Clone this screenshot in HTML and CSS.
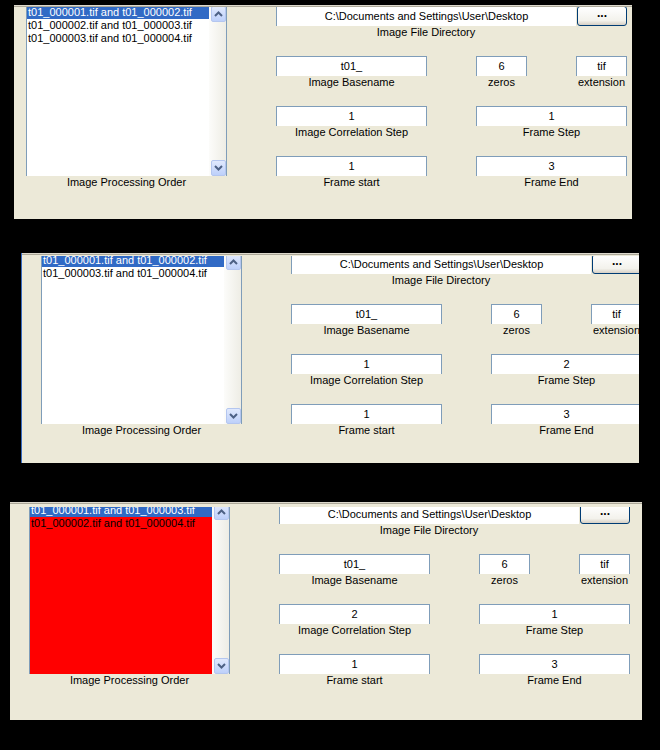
FILE: index.html
```html
<!DOCTYPE html>
<html>
<head>
<meta charset="utf-8">
<title>Image Processing</title>
<link rel="stylesheet" href="styles.css">
</head>
<body>

<div class="panel p1">
  <div class="edge"></div>
  <div class="view">
    <div class="form">
      <div class="listcol">
        <div class="listbox">
          <div class="items">
            <div class="item sel">t01_000001.tif and t01_000002.tif</div>
            <div class="item">t01_000002.tif and t01_000003.tif</div>
            <div class="item">t01_000003.tif and t01_000004.tif</div>
          </div>
          <div class="sbar">
            <div class="sbtn"><svg width="9" height="6" viewBox="0 0 9 6"><polyline points="1,5 4.5,1.5 8,5" fill="none" stroke="#4d6185" stroke-width="2"/></svg></div>
            <div class="sbtn"><svg width="9" height="6" viewBox="0 0 9 6"><polyline points="1,1 4.5,4.5 8,1" fill="none" stroke="#4d6185" stroke-width="2"/></svg></div>
          </div>
        </div>
        <div class="label">Image Processing Order</div>
      </div>
      <div class="fields">
        <div class="row top">
          <div class="field w300"><div class="box dir">C:\Documents and Settings\User\Desktop</div><div class="label">Image File Directory</div></div>
          <div class="btn">...</div>
        </div>
        <div class="row">
          <div class="field w151"><div class="box">t01_</div><div class="label">Image Basename</div></div>
          <div class="field w51"><div class="box">6</div><div class="label">zeros</div></div>
          <div class="field w51"><div class="box">tif</div><div class="label">extension</div></div>
        </div>
        <div class="row">
          <div class="field w151"><div class="box">1</div><div class="label">Image Correlation Step</div></div>
          <div class="field w151"><div class="box">1</div><div class="label">Frame Step</div></div>
        </div>
        <div class="row">
          <div class="field w151"><div class="box">1</div><div class="label">Frame start</div></div>
          <div class="field w151"><div class="box">3</div><div class="label">Frame End</div></div>
        </div>
      </div>
    </div>
  </div>
</div>

<div class="panel p2">
  <div class="edge"></div>
  <div class="view">
    <div class="form">
      <div class="listcol">
        <div class="listbox">
          <div class="items">
            <div class="item sel">t01_000001.tif and t01_000002.tif</div>
            <div class="item">t01_000003.tif and t01_000004.tif</div>
          </div>
          <div class="sbar">
            <div class="sbtn"><svg width="9" height="6" viewBox="0 0 9 6"><polyline points="1,5 4.5,1.5 8,5" fill="none" stroke="#4d6185" stroke-width="2"/></svg></div>
            <div class="sbtn"><svg width="9" height="6" viewBox="0 0 9 6"><polyline points="1,1 4.5,4.5 8,1" fill="none" stroke="#4d6185" stroke-width="2"/></svg></div>
          </div>
        </div>
        <div class="label">Image Processing Order</div>
      </div>
      <div class="fields">
        <div class="row top">
          <div class="field w300"><div class="box dir">C:\Documents and Settings\User\Desktop</div><div class="label">Image File Directory</div></div>
          <div class="btn">...</div>
        </div>
        <div class="row">
          <div class="field w151"><div class="box">t01_</div><div class="label">Image Basename</div></div>
          <div class="field w51"><div class="box">6</div><div class="label">zeros</div></div>
          <div class="field w51"><div class="box">tif</div><div class="label">extension</div></div>
        </div>
        <div class="row">
          <div class="field w151"><div class="box">1</div><div class="label">Image Correlation Step</div></div>
          <div class="field w151"><div class="box">2</div><div class="label">Frame Step</div></div>
        </div>
        <div class="row">
          <div class="field w151"><div class="box">1</div><div class="label">Frame start</div></div>
          <div class="field w151"><div class="box">3</div><div class="label">Frame End</div></div>
        </div>
      </div>
    </div>
  </div>
</div>

<div class="panel p3">
  <div class="edge"></div>
  <div class="view">
    <div class="form">
      <div class="listcol">
        <div class="listbox">
          <div class="items">
            <div class="item sel">t01_000001.tif and t01_000003.tif</div>
            <div class="item">t01_000002.tif and t01_000004.tif</div>
          </div>
          <div class="sbar">
            <div class="sbtn"><svg width="9" height="6" viewBox="0 0 9 6"><polyline points="1,5 4.5,1.5 8,5" fill="none" stroke="#4d6185" stroke-width="2"/></svg></div>
            <div class="sbtn"><svg width="9" height="6" viewBox="0 0 9 6"><polyline points="1,1 4.5,4.5 8,1" fill="none" stroke="#4d6185" stroke-width="2"/></svg></div>
          </div>
        </div>
        <div class="label">Image Processing Order</div>
      </div>
      <div class="fields">
        <div class="row top">
          <div class="field w300"><div class="box dir">C:\Documents and Settings\User\Desktop</div><div class="label">Image File Directory</div></div>
          <div class="btn">...</div>
        </div>
        <div class="row">
          <div class="field w151"><div class="box">t01_</div><div class="label">Image Basename</div></div>
          <div class="field w51"><div class="box">6</div><div class="label">zeros</div></div>
          <div class="field w51"><div class="box">tif</div><div class="label">extension</div></div>
        </div>
        <div class="row">
          <div class="field w151"><div class="box">2</div><div class="label">Image Correlation Step</div></div>
          <div class="field w151"><div class="box">1</div><div class="label">Frame Step</div></div>
        </div>
        <div class="row">
          <div class="field w151"><div class="box">1</div><div class="label">Frame start</div></div>
          <div class="field w151"><div class="box">3</div><div class="label">Frame End</div></div>
        </div>
      </div>
    </div>
  </div>
</div>

</body>
</html>
```

FILE: styles.css
```css
html, body {
  margin: 0;
  background: #000;
}
body {
  width: 660px;
  height: 750px;
  overflow: hidden;
  padding-top: 5px;
  box-sizing: border-box;
  font-family: "Liberation Sans", Arial, sans-serif;
  font-size: 11px;
  color: #000;
}

.panel {
  background: #ece9d8;
  box-sizing: border-box;
}
.p1 {
  margin-left: 14px;
  width: 618px;
}
.p2 {
  margin-top: 34px;
  margin-left: 21px;
  width: 618px;
  border-left: 1px solid #3a6cc0;
}
.p3 {
  margin-top: 39px;
  margin-left: 10px;
  width: 632px;
}

.edge {
  height: 1px;
  background: #dcd8cc;
  border-bottom: 1px solid #aca899;
}

.view {
  overflow: hidden;
}
.p1 .view { height: 212px; }
.p2 .view { margin-top: 1px; height: 207px; }
.p3 .view { margin-top: 3px; height: 213px; }

.form {
  display: flex;
  align-items: flex-start;
  column-gap: 49px;
}
.p1 .form { margin-top: -2px; padding-left: 12px; }
.p2 .form { margin-top: -3px; padding-left: 19px; }
.p3 .form { margin-top: -4px; padding-left: 19px; }

.listcol, .fields, .field, .btn {
  flex-shrink: 0;
}

.listbox {
  width: 201px;
  height: 171px;
  box-sizing: border-box;
  border: 1px solid #7f9db9;
  border-bottom: none;
  background: #fff;
  display: flex;
}
.items {
  flex: 1;
  min-width: 0;
}
.p3 .items {
  background: #ff0000;
}
.item {
  height: 13px;
  line-height: 12px;
  padding-left: 1px;
  white-space: nowrap;
  overflow: hidden;
}
.item.sel {
  background: #316ac5;
  color: #fff;
}

.sbar {
  width: 17px;
  flex-shrink: 0;
  background: linear-gradient(to right, #fcfcfa, #eeede5);
  display: flex;
  flex-direction: column;
  justify-content: space-between;
  align-items: flex-end;
}
.sbtn {
  width: 15px;
  height: 16px;
  box-sizing: border-box;
  border: 1px solid #b4c6ef;
  border-radius: 2px;
  background: linear-gradient(#e0e9fd, #bdd0fa);
  display: flex;
  align-items: center;
  justify-content: center;
}
.sbtn svg {
  display: block;
}

.label {
  height: 12px;
  line-height: 12px;
  text-align: center;
  white-space: nowrap;
}

.fields {
  margin-top: 1px;
  display: flex;
  flex-direction: column;
  row-gap: 18px;
}
.row {
  display: flex;
  align-items: flex-start;
  column-gap: 49px;
}
.row.top {
  column-gap: 1px;
}

.w151 { width: 151px; }
.w51 { width: 51px; }
.w300 { width: 300px; }

.box {
  height: 20px;
  box-sizing: border-box;
  border: 1px solid #7f9db9;
  border-bottom: none;
  background: #fff;
  text-align: center;
  line-height: 19px;
  white-space: nowrap;
  overflow: hidden;
}
.box.dir {
  border-right: none;
}

.btn {
  width: 50px;
  height: 20px;
  box-sizing: border-box;
  border: 1px solid #003c74;
  border-radius: 3px;
  background: linear-gradient(#ffffff, #f3f2ec 75%, #d6d0c5);
  font-size: 12px;
  font-weight: bold;
  text-align: center;
  line-height: 12px;
  color: #000;
}
```
